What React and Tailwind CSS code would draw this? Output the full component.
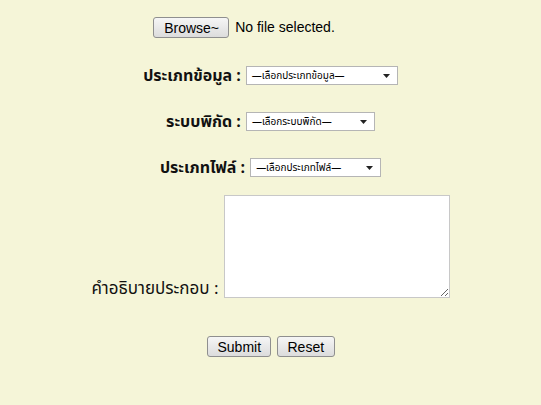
import { useState } from "react";

const thai = "font-['Tahoma','Noto_Sans_Thai','Noto_Sans','DejaVu_Sans',sans-serif]";
const latin = "font-['Liberation_Sans','Arial',sans-serif]";

function Btn({ children, className = "" }) {
  return (
    <button
      type="button"
      className={`h-[21px] rounded-[3px] border border-[#8f8f8f] bg-gradient-to-b from-[#f6f6f6] to-[#dcdcdc] px-[10px] text-[14px] leading-none text-black ${latin} ${className}`}
    >
      {children}
    </button>
  );
}

function FakeSelect({ text, width }) {
  return (
    <div
      className={`flex h-[19px] items-center justify-between border border-[#b5b5b5] bg-white pl-[5px] pr-[7px] ${width}`}
    >
      <span className={`text-[10px] leading-none text-black ${thai}`}>{text}</span>
      <svg width="7" height="4" viewBox="0 0 7 4">
        <path d="M0 0h7L3.5 4z" fill="#222" />
      </svg>
    </div>
  );
}

function Row({ label, children, bold = true, className = "" }) {
  return (
    <div className={`flex justify-center ${className}`}>
      <span
        className={`mr-[5px] leading-none text-[#111] ${bold ? "font-bold text-[16px]" : "text-[17px]"} ${thai}`}
      >
        {label}
      </span>
      {children}
    </div>
  );
}

export default function App() {
  const [desc, setDesc] = useState("");

  return (
    <div className="min-h-[405px] bg-[#f5f5d8] pt-[17px]">
      <div className="flex h-[21px] items-center justify-center">
        <Btn className="w-[76px] px-0">Browse~</Btn>
        <span className={`ml-[6px] text-[14px] text-black ${latin}`}>No file selected.</span>
        <span className="w-[53px]" />
      </div>

      <Row label="ประเภทข้อมูล :" className="mt-[28px] items-center">
        <FakeSelect text="—เลือกประเภทข้อมูล—" width="w-[152px]" />
      </Row>

      <Row label="ระบบพิกัด :" className="mt-[27px] items-center">
        <FakeSelect text="—เลือกระบบพิกัด—" width="w-[129px]" />
      </Row>

      <Row label="ประเภทไฟล์ :" className="mt-[27px] items-center">
        <FakeSelect text="—เลือกประเภทไฟล์—" width="w-[131px]" />
      </Row>

      <Row label="คำอธิบายประกอบ :" bold={false} className="mt-[18px] items-end">
        <textarea
          value={desc}
          onChange={(e) => setDesc(e.target.value)}
          className="h-[103px] w-[226px] border border-[#c8c8c8] bg-white outline-none"
        />
      </Row>

      <div className="mt-[38px] flex justify-center gap-[6px]">
        <Btn className="w-[64px] px-0">Submit</Btn>
        <Btn className="w-[58px] px-0">Reset</Btn>
      </div>
    </div>
  );
}
